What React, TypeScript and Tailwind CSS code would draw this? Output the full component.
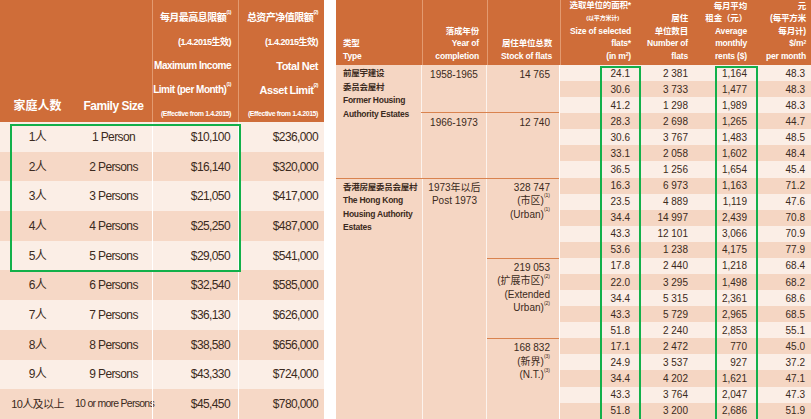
import React from "react";

const F = { fontFamily: '"Liberation Sans","Noto Sans CJK SC",sans-serif' };

const left = [
  ["1人", "1 Person", "$10,100", "$236,000"],
  ["2人", "2 Persons", "$16,140", "$320,000"],
  ["3人", "3 Persons", "$21,050", "$417,000"],
  ["4人", "4 Persons", "$25,250", "$487,000"],
  ["5人", "5 Persons", "$29,050", "$541,000"],
  ["6人", "6 Persons", "$32,540", "$585,000"],
  ["7人", "7 Persons", "$36,130", "$626,000"],
  ["8人", "8 Persons", "$38,580", "$656,000"],
  ["9人", "9 Persons", "$43,330", "$724,000"],
  ["10人及以上", "10 or more Persons", "$45,450", "$780,000"],
];

const data = [
  ["24.1", "2 381", "1,164", "48.3"],
  ["30.6", "3 733", "1,477", "48.3"],
  ["41.2", "1 298", "1,989", "48.3"],
  ["28.3", "2 698", "1,265", "44.7"],
  ["30.6", "3 767", "1,483", "48.5"],
  ["33.1", "2 058", "1,602", "48.4"],
  ["36.5", "1 256", "1,654", "45.4"],
  ["16.3", "6 973", "1,163", "71.2"],
  ["23.5", "4 889", "1,119", "47.6"],
  ["34.4", "14 997", "2,439", "70.8"],
  ["43.3", "12 101", "3,066", "70.9"],
  ["53.6", "1 238", "4,175", "77.9"],
  ["17.8", "2 440", "1,218", "68.4"],
  ["22.0", "3 295", "1,498", "68.2"],
  ["34.4", "5 315", "2,361", "68.6"],
  ["43.3", "5 729", "2,965", "68.5"],
  ["51.8", "2 240", "2,853", "55.1"],
  ["17.1", "2 472", "770", "45.0"],
  ["24.9", "3 537", "927", "37.2"],
  ["34.4", "4 202", "1,621", "47.1"],
  ["43.3", "3 764", "2,047", "47.3"],
  ["51.8", "3 200", "2,686", "51.9"],
];

const Sup = ({ t }: { t: string }) => <sup className="text-[5px] align-super">{t}</sup>;

function LeftTable() {
  return (
    <div className="relative w-[324px] shrink-0 text-[#3b2a20]" style={F}>
      <div className="flex h-[122px] bg-[#cf6d39] text-white font-bold">
        <div className="w-[75px] flex items-end justify-center pb-[7px] text-[12px]">家庭人数</div>
        <div className="w-[77px] flex items-end justify-center pb-[7px] text-[12px] tracking-[-0.04em]">Family Size</div>
        <div className="w-[86px] border-l border-[#e39a70] flex flex-col items-end pr-[7px] pt-[6px] leading-[24px] text-[10px] tracking-[-0.05em] whitespace-nowrap">
          <div>每月最高息限额<Sup t="(1)" /></div>
          <div className="text-[9px]">(1.4.2015生效)</div>
          <div>Maximum Income</div>
          <div>Limit (per Month)<Sup t="(1)" /></div>
          <div className="text-[7px] tracking-[-0.06em]">(Effective from 1.4.2015)</div>
        </div>
        <div className="w-[86px] border-l border-[#e39a70] flex flex-col items-end pr-[6px] pt-[6px] leading-[24px] text-[10px] tracking-[-0.05em] whitespace-nowrap">
          <div>总资产净值限额<Sup t="(2)" /></div>
          <div className="text-[9px]">(1.4.2015生效)</div>
          <div className="text-[11px]">Total Net</div>
          <div className="text-[11px]">Asset Limit<Sup t="(2)" /></div>
          <div className="text-[7px] tracking-[-0.06em]">(Effective from 1.4.2015)</div>
        </div>
      </div>
      {left.map((r, i) => (
        <div key={i} className={`flex h-[29.7px] items-center text-[12px] tracking-[-0.05em] ${i % 2 ? "bg-[#f6d8c6]" : "bg-[#fbeee6]"}`}>
          <div className={`w-[75px] text-center whitespace-nowrap ${i === 9 ? "text-[11px]" : ""}`}>{r[0]}</div>
          <div className={`w-[77px] text-center whitespace-nowrap ${i === 9 ? "text-[10.5px] tracking-[-0.07em]" : ""}`}>{r[1]}</div>
          <div className="w-[86px] h-full border-l border-white flex items-center justify-end pr-[8px]">{r[2]}</div>
          <div className="w-[86px] h-full border-l border-white flex items-center justify-end pr-[6px]">{r[3]}</div>
        </div>
      ))}
      <div className="absolute left-[10px] top-[124px] w-[231px] h-[148px] border-[2px] border-[#12b04a]" />
    </div>
  );
}

const Hd = ({ w, lines }: { w: string; lines: React.ReactNode[] }) => (
  <div className={`${w} h-full flex flex-col justify-end items-end pb-[3px] leading-[12.5px]`}>
    {lines.map((l, i) => <div key={i} className="whitespace-nowrap">{l}</div>)}
  </div>
);

function RightTable() {
  return (
    <div className="relative w-[475px] shrink-0 text-[#3b2a20]" style={F}>
      <div className="flex h-[65px] bg-[#cf6d39] text-white font-bold text-[8.5px] tracking-[-0.02em]">
        <div className="w-[86px] flex flex-col justify-end pl-[7px] pb-[3px] leading-[12.5px]"><div>类型</div><div>Type</div></div>
        <Hd w="w-[65px] border-l border-[#e39a70] pr-[8px]" lines={["落成年份", "Year of", "completion"]} />
        <Hd w="w-[73px] border-l border-[#e39a70] pr-[8px]" lines={["居住单位总数", "Stock of flats"]} />
        <Hd w="w-[80px] border-l border-[#e39a70] pr-[9px]" lines={[
          <span className="pl-[4px]">选取单位的面积*</span>,
          <span className="text-[6px] pr-[12px]">(以平方米计)</span>,
          "Size of selected", "flats*", <span>(in m<sup className="text-[5px]">2</sup>)</span>]} />
        <Hd w="w-[57px] pr-[9px]" lines={["居住", "单位数目", "Number of", "flats"]} />
        <Hd w="w-[60px] pr-[10px]" lines={["每月平均", "租金（元）", "Average", "monthly", "rents ($)"]} />
        <Hd w="w-[54px] pr-[5px]" lines={["元", "(每平方米", "每月计)", <span>$/m<sup className="text-[5px]">2</sup></span>, "per month"]} />
      </div>
      <div className="flex">
        <div className="w-[224px] bg-[#f5d6c3] text-[10px] border-r border-white">
          <div className="flex h-[112.6px]">
            <div className="w-[86px] pl-[7px] pt-[2px] font-bold text-[8.5px] leading-[13.5px] tracking-[-0.03em] whitespace-nowrap">
              <div>前屋宇建设</div><div>委员会屋村</div><div>Former Housing</div><div>Authority Estates</div>
            </div>
            <div className="w-[138px] flex flex-col">
              <div className="flex h-[48.3px] border-b border-[#d9834f]">
                <div className="w-[65px] border-l border-white/70 text-center pt-[2px]">1958-1965</div>
                <div className="w-[73px] border-l border-white/70 text-right pr-[9px] pt-[2px]">14 765</div>
              </div>
              <div className="flex flex-1">
                <div className="w-[65px] border-l border-white/70 text-center pt-[2px]">1966-1973</div>
                <div className="w-[73px] border-l border-white/70 text-right pr-[9px] pt-[2px]">12 740</div>
              </div>
            </div>
          </div>
          <div className="flex h-[241.4px] border-t border-[#d9834f]">
            <div className="w-[86px] pl-[7px] pt-[2px] font-bold text-[8.5px] leading-[13.5px] tracking-[-0.03em] whitespace-nowrap">
              <div>香港房屋委员会屋村</div><div>The Hong Kong</div><div>Housing Authority</div><div>Estates</div>
            </div>
            <div className="w-[65px] border-l border-white/70 text-center pt-[2px] leading-[13.5px]">
              <div>1973年以后</div><div>Post 1973</div>
            </div>
            <div className="w-[73px] border-l border-white/70 flex flex-col text-right leading-[13.5px] whitespace-nowrap">
              <div className="h-[80.4px] border-b border-[#d9834f] pt-[2px] pr-[9px]">
                <div>328 747</div><div>(市区)<Sup t="(1)" /></div><div>(Urban)<Sup t="(1)" /></div>
              </div>
              <div className="h-[80.4px] border-b border-[#d9834f] pt-[2px] pr-[9px]">
                <div>219 053</div><div>(扩展市区)<Sup t="(2)" /></div><div>(Extended</div><div>Urban)<Sup t="(2)" /></div>
              </div>
              <div className="flex-1 pt-[2px] pr-[9px]">
                <div>168 832</div><div>(新界)<Sup t="(3)" /></div><div>(N.T.)<Sup t="(3)" /></div>
              </div>
            </div>
          </div>
        </div>
        <div className="w-[251px] text-[10px]">
          {data.map((r, i) => (
            <div key={i} className={`flex h-[16.09px] items-center ${i % 2 ? "bg-[#f5d6c3]" : "bg-[#fbeee6]"}`}>
              <div className="w-[80px] text-right pr-[10px]">{r[0]}</div>
              <div className="w-[57px] text-right pr-[9px]">{r[1]}</div>
              <div className="w-[60px] text-right pr-[10px]">{r[2]}</div>
              <div className="w-[54px] text-right pr-[6px]">{r[3]}</div>
            </div>
          ))}
        </div>
      </div>
      <div className="absolute left-[264px] top-[66px] w-[41px] h-[360px] border-[2px] border-[#12b04a]" />
      <div className="absolute left-[379px] top-[66px] w-[43px] h-[360px] border-[2px] border-[#12b04a]" />
    </div>
  );
}

export default function App() {
  return (
    <div className="w-[811px] h-[419px] overflow-hidden bg-white flex">
      <LeftTable />
      <div className="w-[12px] shrink-0" />
      <RightTable />
    </div>
  );
}
